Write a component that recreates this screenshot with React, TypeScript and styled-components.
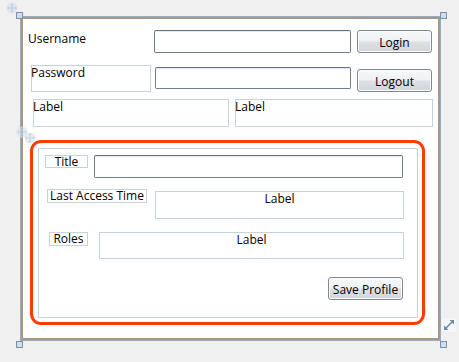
import React from 'react';
import styled, { createGlobalStyle } from 'styled-components';

const Global = createGlobalStyle`
  html, body { margin: 0; padding: 0; background: #f0f0f0; }
  body {
    font-family: "Open Sans", "Liberation Sans", sans-serif;
    font-size: 12px;
    color: #000;
  }
  * { box-sizing: border-box; }
`;

const Stage = styled.div`
  position: relative;
  width: 459px;
  height: 362px;
  padding: 16px 0 0 20px;
`;

const Frame = styled.div`
  width: 421px;
  height: 325px;
  border: 1px solid #9aacbf;
  box-shadow: inset 0 0 0 2px #a69886;
  background: #fff;
  padding: 2px;
  display: flex;
  flex-direction: column;
`;

const Row = styled.div<{ $top: number }>`
  display: flex;
  align-items: flex-start;
  margin-top: ${p => p.$top}px;
`;

const PlainLabel = styled.div<{ $w: number; $left: number }>`
  width: ${p => p.$w}px;
  margin-left: ${p => p.$left}px;
  line-height: 16px;
  padding-top: 1px;
`;

const BoxLabel = styled.div<{ $w: number; $h: number; $left?: number; $mt?: number; $center?: boolean }>`
  width: ${p => p.$w}px;
  height: ${p => p.$h}px;
  margin-left: ${p => p.$left ?? 0}px;
  margin-top: ${p => p.$mt ?? 0}px;
  border: 1px solid #c7d2de;
  line-height: 14px;
  padding-left: ${p => (p.$center ? 0 : 0)}px;
  margin-right: 0;
  text-align: ${p => (p.$center ? 'center' : 'left')};
  white-space: nowrap;
  overflow: visible;
  text-indent: ${p => (p.$center ? 0 : -1)}px;
`;

const Tag = styled.div<{ $w: number; $h: number; $left: number; $mt?: number }>`
  width: ${p => p.$w}px;
  height: ${p => p.$h}px;
  margin-left: ${p => p.$left}px;
  margin-top: ${p => p.$mt ?? 0}px;
  border: 1px solid #c7d2de;
  display: flex;
  align-items: center;
  justify-content: center;
  line-height: 12px;
  white-space: nowrap;
`;

const TextBox = styled.div<{ $w: number; $h: number; $left: number; $mt?: number }>`
  width: ${p => p.$w}px;
  height: ${p => p.$h}px;
  margin-left: ${p => p.$left}px;
  margin-top: ${p => p.$mt ?? 0}px;
  border: 1px solid #6e7f90;
  border-top-color: #63748a;
  border-radius: 2px;
  background: #fff;
  box-shadow: inset 0 1px 0 #e3e9ef;
`;

const Button = styled.div<{ $left: number; $mt?: number; $w?: number }>`
  width: ${p => p.$w ?? 75}px;
  height: 23px;
  margin-left: ${p => p.$left}px;
  margin-top: ${p => p.$mt ?? 0}px;
  border: 1px solid #7d8894;
  border-radius: 3px;
  box-shadow: inset 0 0 0 1px #fbfbfb;
  background: linear-gradient(#f7f8f9 0%, #eff0f2 48%, #dde0e4 52%, #d2d6db 100%);
  display: flex;
  align-items: center;
  justify-content: center;
  padding-top: 1px;
  white-space: nowrap;
`;

const Group = styled.div`
  width: 395px;
  height: 185px;
  margin: 13px 0 0 7px;
  border: 3px solid #ff3c00;
  border-radius: 11px;
  padding: 5px 4px 4px 5px;
`;

const GroupInner = styled.div`
  width: 380px;
  height: 170px;
  border: 1px solid #c8d3df;
  display: flex;
  flex-direction: column;
`;

const ButtonRow = styled.div`
  display: flex;
  justify-content: flex-end;
  padding-right: 14px;
  margin-top: 18px;
`;

const Handle = styled.div<{ $x: number; $y: number }>`
  position: absolute;
  left: ${p => p.$x}px;
  top: ${p => p.$y}px;
  width: 7px;
  height: 7px;
  border: 1px solid #7891ad;
  background: #d3dde8;
`;

const Adorner = styled.svg<{ $x: number; $y: number; $o?: number }>`
  position: absolute;
  left: ${p => p.$x}px;
  top: ${p => p.$y}px;
  opacity: ${p => p.$o ?? 1};
`;

const MoveIcon: React.FC<{ x: number; y: number; o?: number }> = ({ x, y, o }) => (
  <Adorner $x={x} $y={y} $o={o} width="12" height="12" viewBox="0 0 12 12">
    <circle cx="6" cy="6" r="5.5" fill="#dbe4ee" />
    <path d="M6 1.5 L6 10.5 M1.5 6 L10.5 6" stroke="#b4c4d6" strokeWidth="1.2" />
    <path d="M6 1 L4.5 3 L7.5 3 Z M6 11 L4.5 9 L7.5 9 Z M1 6 L3 4.5 L3 7.5 Z M11 6 L9 4.5 L9 7.5 Z" fill="#b4c4d6" />
  </Adorner>
);

const ResizeIcon: React.FC = () => (
  <Adorner $x={442} $y={318} width="14" height="14" viewBox="0 0 14 14">
    <rect x="0" y="0" width="14" height="14" fill="#f6f7f9" />
    <path d="M3.5 10.5 L10.5 3.5" stroke="#6f8aa8" strokeWidth="1.6" />
    <path d="M2 12 L2 7.5 L6.5 12 Z M12 2 L12 6.5 L7.5 2 Z" fill="#6f8aa8" />
  </Adorner>
);

export default function App() {
  return (
    <Stage>
      <Global />
      <Frame>
        <Row $top={11}>
          <PlainLabel $w={126} $left={5}>Username</PlainLabel>
          <TextBox $w={197} $h={23} $left={0} />
          <Button $left={6}>Login</Button>
        </Row>
        <Row $top={12}>
          <BoxLabel $w={120} $h={27} $left={8}>Password</BoxLabel>
          <TextBox $w={196} $h={22} $left={4} $mt={2} />
          <Button $left={6} $mt={4}>Logout</Button>
        </Row>
        <Row $top={7}>
          <BoxLabel $w={196} $h={28} $left={10}>Label</BoxLabel>
          <BoxLabel $w={198} $h={28} $left={6}>Label</BoxLabel>
        </Row>
        <Group>
          <GroupInner>
            <Row $top={6}>
              <Tag $w={43} $h={13} $left={6}>Title</Tag>
              <TextBox $w={309} $h={23} $left={6} />
            </Row>
            <Row $top={11}>
              <Tag $w={100} $h={14} $left={8}>Last Access Time</Tag>
              <BoxLabel $w={249} $h={28} $left={8} $mt={2} $center>Label</BoxLabel>
            </Row>
            <Row $top={13}>
              <Tag $w={39} $h={14} $left={10}>Roles</Tag>
              <BoxLabel $w={305} $h={27} $left={11} $center>Label</BoxLabel>
            </Row>
            <ButtonRow>
              <Button $left={0}>Save Profile</Button>
            </ButtonRow>
          </GroupInner>
        </Group>
      </Frame>
      <Handle $x={16} $y={12} />
      <Handle $x={440} $y={12} />
      <Handle $x={16} $y={341} />
      <Handle $x={440} $y={341} />
      <MoveIcon x={6} y={2} o={0.8} />
      <MoveIcon x={16} y={126} o={0.7} />
      <MoveIcon x={24} y={132} o={0.7} />
      <ResizeIcon />
    </Stage>
  );
}
